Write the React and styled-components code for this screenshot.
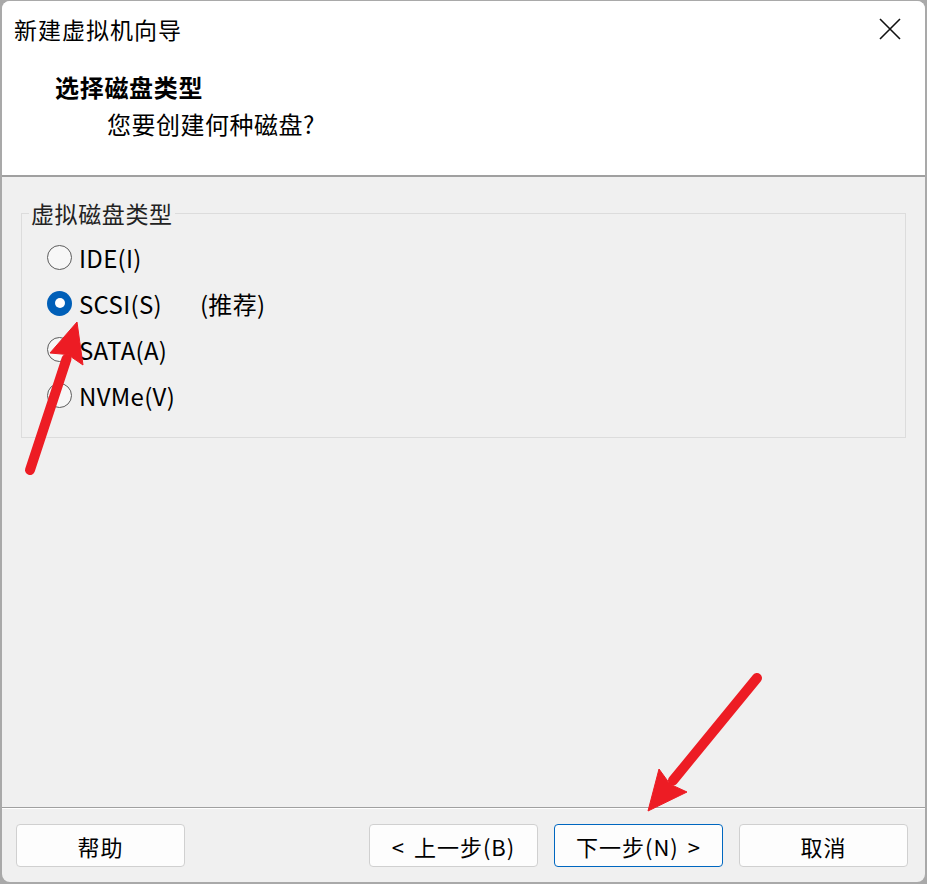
import React, { useState } from "react";
import styled, { createGlobalStyle } from "styled-components";

const Global = createGlobalStyle`
  *, *::before, *::after { box-sizing: border-box; }
  html, body { margin: 0; padding: 0; }
  body {
    background: #a9a9a9;
    font-family: "Microsoft YaHei", "Noto Sans CJK SC", "Noto Sans", sans-serif;
    overflow: hidden;
  }
  #root { width: 927px; height: 884px; }
`;

const Stage = styled.div`
  position: relative;
  width: 927px;
  height: 884px;
  padding: 1px 2px 2px 2px;
`;

const Window = styled.div`
  width: 100%;
  height: 100%;
  background: #f0f0f0;
  border-radius: 8px;
  overflow: hidden;
  display: flex;
  flex-direction: column;
`;

const Header = styled.div`
  background: #ffffff;
  height: 176px;
  flex: none;
  display: flex;
  flex-direction: column;
  border-bottom: 2px solid #a0a0a0;
`;

const TitleBar = styled.div`
  height: 58px;
  display: flex;
  align-items: center;
  justify-content: space-between;
  padding: 0 12px 3px 12px;
`;

const Title = styled.div`
  font-size: 23px;
  color: #000;
  letter-spacing: 1px;
`;

const CloseBtn = styled.button`
  width: 46px;
  height: 40px;
  border: 0;
  background: transparent;
  display: flex;
  align-items: center;
  justify-content: center;
  padding: 0;
`;

const HeaderText = styled.div`
  padding: 11px 0 0 53px;
  display: flex;
  flex-direction: column;
  gap: 3px;
`;

const Heading = styled.div`
  font-size: 24px;
  font-weight: 700;
  letter-spacing: 0.7px;
  line-height: 34px;
  color: #000;
`;

const SubHeading = styled.div`
  font-size: 24px;
  letter-spacing: 0.5px;
  line-height: 34px;
  padding-left: 52px;
  color: #000;
`;

const Body = styled.div`
  flex: 1;
  padding: 25px 19px 0 19px;
`;

const Group = styled.fieldset`
  margin: 0;
  border: 1px solid #dcdcdc;
  padding: 10px 0 19px 25px;
  display: flex;
  flex-direction: column;
`;

const Legend = styled.legend`
  font-size: 23px;
  letter-spacing: 0.6px;
  color: #222;
  padding: 0 2px;
  margin-left: -18px;
  line-height: 22px;
`;

const RadioRow = styled.label`
  display: flex;
  align-items: center;
  height: 46px;
  font-size: 24px;
  letter-spacing: 0.3px;
  color: #000;
  cursor: default;
`;

const RadioCircle = styled.span`
  width: 25px;
  height: 25px;
  border-radius: 50%;
  margin-right: 7px;
  flex: none;
  display: flex;
  align-items: center;
  justify-content: center;
  background: ${(p) => (p.$checked ? "#005fb8" : "#f7f7f7")};
  border: ${(p) => (p.$checked ? "none" : "1.5px solid #5c5c5c")};
  &::after {
    content: "";
    display: ${(p) => (p.$checked ? "block" : "none")};
    width: 10px;
    height: 10px;
    border-radius: 50%;
    background: #ffffff;
  }
`;

const Hint = styled.span`
  margin-left: 38px;
`;

const Footer = styled.div`
  height: 75px;
  flex: none;
  border-top: 1px solid #a0a0a0;
  box-shadow: inset 0 1px 0 #ffffff;
  display: flex;
  align-items: flex-start;
  padding: 16px 17px 0 14px;
  gap: 16px;
`;

const Spacer = styled.div`
  flex: 1;
`;

const Button = styled.button`
  width: 169px;
  height: 43px;
  border-radius: 4px;
  background: #fdfdfd;
  border: ${(p) => (p.$primary ? "1.5px solid #0067c0" : "1px solid #d0d0d0")};
  font-family: "Microsoft YaHei", "Noto Sans CJK SC", "Noto Sans", sans-serif;
  font-size: 22px;
  letter-spacing: 1px;
  word-spacing: 3px;
  color: #000;
  padding: 0;
  display: flex;
  align-items: center;
  justify-content: center;
`;

const Overlay = styled.svg`
  position: absolute;
  left: 0;
  top: 0;
  pointer-events: none;
`;

function Arrow({ tail, tip, c1, c2 }) {
  const bx = (c1[0] + c2[0]) / 2;
  const by = (c1[1] + c2[1]) / 2;
  return (
    <g fill="#ed1c24" stroke="#ed1c24">
      <line x1={tail[0]} y1={tail[1]} x2={bx} y2={by} strokeWidth="10" strokeLinecap="round" />
      <polygon points={`${tip[0]},${tip[1]} ${c1[0]},${c1[1]} ${bx + (tip[0] - bx) * 0.12},${by + (tip[1] - by) * 0.12} ${c2[0]},${c2[1]}`} strokeWidth="1" strokeLinejoin="miter" />
    </g>
  );
}

const options = [
  { id: "ide", label: "IDE(I)" },
  { id: "scsi", label: "SCSI(S)", hint: "(推荐)" },
  { id: "sata", label: "SATA(A)" },
  { id: "nvme", label: "NVMe(V)" },
];

export default function App() {
  const [sel, setSel] = useState("scsi");
  return (
    <Stage>
      <Global />
      <Window>
        <Header>
          <TitleBar>
            <Title>新建虚拟机向导</Title>
            <CloseBtn aria-label="关闭">
              <svg width="24" height="24" viewBox="0 0 24 24">
                <path d="M2 2 L22 22 M22 2 L2 22" stroke="#111" strokeWidth="1.6" fill="none" />
              </svg>
            </CloseBtn>
          </TitleBar>
          <HeaderText>
            <Heading>选择磁盘类型</Heading>
            <SubHeading>您要创建何种磁盘?</SubHeading>
          </HeaderText>
        </Header>
        <Body>
          <Group>
            <Legend>虚拟磁盘类型</Legend>
            {options.map((o) => (
              <RadioRow key={o.id} onClick={() => setSel(o.id)}>
                <RadioCircle $checked={sel === o.id} />
                {o.label}
                {o.hint && <Hint>{o.hint}</Hint>}
              </RadioRow>
            ))}
          </Group>
        </Body>
        <Footer>
          <Button>帮助</Button>
          <Spacer />
          <Button>&lt; 上一步(B)</Button>
          <Button $primary>下一步(N) &gt;</Button>
          <Button>取消</Button>
        </Footer>
      </Window>
      <Overlay width="927" height="884" viewBox="0 0 927 884">
        <Arrow tail={[30, 470]} tip={[77, 322]} c1={[50, 353]} c2={[83, 365]} />
        <Arrow tail={[757, 678]} tip={[648, 811]} c1={[659, 769]} c2={[687, 792]} />
      </Overlay>
    </Stage>
  );
}
